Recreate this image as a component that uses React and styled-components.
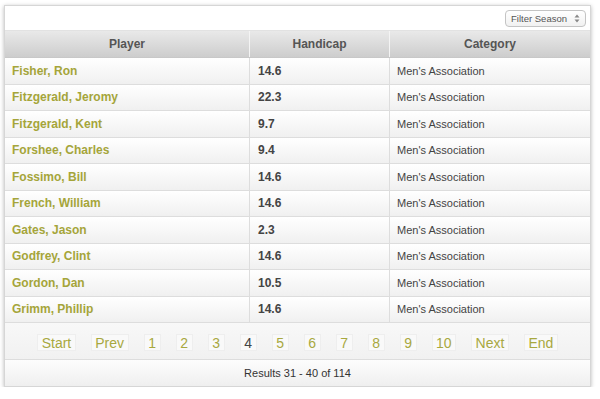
import React from "react";
import styled, { createGlobalStyle } from "styled-components";

const GlobalStyle = createGlobalStyle`
  html, body {
    margin: 0;
    padding: 0;
    background: #ffffff;
    font-family: "Liberation Sans", Arial, sans-serif;
  }
`;

const players = [
  { name: "Fisher, Ron", handicap: "14.6" },
  { name: "Fitzgerald, Jeromy", handicap: "22.3" },
  { name: "Fitzgerald, Kent", handicap: "9.7" },
  { name: "Forshee, Charles", handicap: "9.4" },
  { name: "Fossimo, Bill", handicap: "14.6" },
  { name: "French, William", handicap: "14.6" },
  { name: "Gates, Jason", handicap: "2.3" },
  { name: "Godfrey, Clint", handicap: "14.6" },
  { name: "Gordon, Dan", handicap: "10.5" },
  { name: "Grimm, Phillip", handicap: "14.6" },
];

const pages = ["Start", "Prev", "1", "2", "3", "4", "5", "6", "7", "8", "9", "10", "Next", "End"];

const App = () => {
  return (
    <>
      <GlobalStyle />
      <Card>
        <Toolbar>
          <SeasonSelect>
            <span>Filter Season</span>
            <svg width="6" height="9" viewBox="0 0 6 9">
              <path d="M3 0.5 L5.5 3.5 H0.5 Z" fill="#888" />
              <path d="M3 8.5 L5.5 5.5 H0.5 Z" fill="#888" />
            </svg>
          </SeasonSelect>
        </Toolbar>

        <HeaderRow>
          <HeaderCell>Player</HeaderCell>
          <HeaderCell>Handicap</HeaderCell>
          <HeaderCell last>Category</HeaderCell>
        </HeaderRow>

        {players.map(({ name, handicap }) => (
          <Row key={name}>
            <PlayerCell>{name}</PlayerCell>
            <HandicapCell>{handicap}</HandicapCell>
            <CategoryCell>Men's Association</CategoryCell>
          </Row>
        ))}

        <Pagination>
          {pages.map((label) => (
            <PageButton key={label} current={label === "4"}>
              {label}
            </PageButton>
          ))}
        </Pagination>

        <Footer>Results 31 - 40 of 114</Footer>
      </Card>
    </>
  );
};

const Card = styled.div`
  width: 587px;
  margin: 5px 0 0 4px;
  background: #ffffff;
  border: 1px solid #d6d6d6;
  box-sizing: border-box;
  box-shadow: 0 1px 4px rgba(0, 0, 0, 0.28);
`;

const Toolbar = styled.div`
  display: flex;
  justify-content: flex-end;
  align-items: center;
  height: 24px;
  padding: 0 4px;
  border-bottom: 1px solid #e2e2e2;
`;

const SeasonSelect = styled.div`
  display: flex;
  align-items: center;
  gap: 7px;
  height: 15px;
  margin-top: 1px;
  padding: 0 5px;
  border: 1px solid #c4c4c4;
  border-radius: 4px;
  background: linear-gradient(#ffffff, #f1f1f1);
  font-size: 9.5px;
  color: #555555;
`;

const columns = "245px 140px 1fr";

const HeaderRow = styled.div`
  display: grid;
  grid-template-columns: ${columns};
  height: 27px;
  background: linear-gradient(#e9e9e9, #cdcdcd);
  border-bottom: 1px solid #c8c8c8;
  box-sizing: border-box;
`;

const HeaderCell = styled.div`
  display: flex;
  align-items: center;
  justify-content: center;
  font-size: 12px;
  font-weight: bold;
  color: #555555;
  border-right: ${(props) => (props.last ? "none" : "1px solid #f4f4f4")};
`;

const Row = styled.div`
  display: grid;
  grid-template-columns: ${columns};
  height: 26.5px;
  box-sizing: border-box;
  background: linear-gradient(#ffffff, #f0f0f0);
  border-bottom: 1px solid #dddddd;
`;

const Cell = styled.div`
  display: flex;
  align-items: center;
  padding-left: 7px;
  border-right: 1px solid #dddddd;
  white-space: nowrap;
`;

const PlayerCell = styled(Cell)`
  font-size: 12px;
  font-weight: bold;
  color: #a5a53a;
`;

const HandicapCell = styled(Cell)`
  padding-left: 8px;
  font-size: 12px;
  font-weight: bold;
  color: #444444;
`;

const CategoryCell = styled(Cell)`
  border-right: none;
  font-size: 11px;
  color: #444444;
`;

const Pagination = styled.div`
  display: flex;
  justify-content: center;
  align-items: center;
  gap: 15px;
  height: 37px;
  padding: 3px 0 0 0;
  box-sizing: border-box;
  background: linear-gradient(#f8f8f8, #f1f1f1);
  border-bottom: 1px solid #dddddd;
`;

const PageButton = styled.div`
  display: flex;
  align-items: center;
  justify-content: center;
  min-width: 17px;
  height: 17px;
  padding: 0 3.5px;
  box-sizing: border-box;
  border: 1px solid #eeeeee;
  background: #f9f9f9;
  font-size: 14px;
  color: ${(props) => (props.current ? "#444444" : "#a8a83f")};
`;

const Footer = styled.div`
  display: flex;
  align-items: center;
  justify-content: center;
  height: 26px;
  background: linear-gradient(#fdfdfd, #efefef);
  font-size: 11px;
  color: #333333;
`;

export default App;
